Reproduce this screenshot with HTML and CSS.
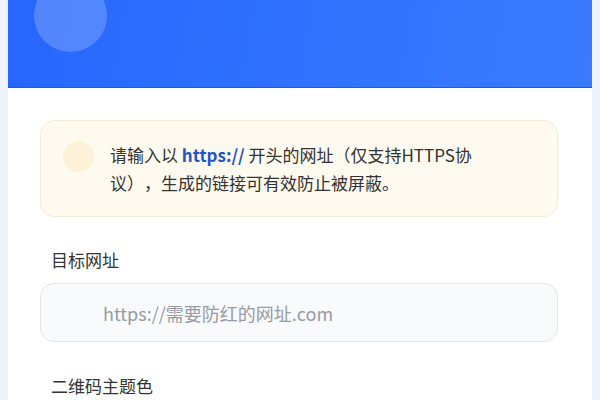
FILE: index.html
```html
<!DOCTYPE html>
<html lang="zh-CN">
<head>
<meta charset="utf-8">
<title>防红链接生成</title>
<link rel="stylesheet" href="styles.css">
</head>
<body>
<div class="card">
  <div class="hero">
    <span class="bubble"></span>
  </div>
  <div class="content">
    <div class="notice">
      <span class="notice-icon"></span>
      <p class="notice-text">请输入以 <strong>https://</strong> 开头的网址（仅支持HTTPS协议），生成的链接可有效防止被屏蔽。</p>
    </div>
    <div class="field">
      <label class="label" for="url">目标网址</label>
      <input class="input" id="url" type="text" placeholder="https://需要防红的网址.com">
    </div>
    <div class="field">
      <label class="label">二维码主题色</label>
    </div>
  </div>
</div>
</body>
</html>
```
FILE: styles.css
```css
html, body {
  height: 100%;
}
body {
  margin: 0 8px;
  background: #eef2fa;
  font-family: "Noto Sans CJK SC", "Noto Sans", sans-serif;
  color: #333;
  overflow: hidden;
}
.card {
  background: #fff;
  min-height: 100%;
  box-shadow: 0 0 6px rgba(40, 70, 140, 0.08);
}
.hero {
  position: relative;
  height: 87px;
  overflow: hidden;
  background: linear-gradient(100deg, #2766fd 0%, #2f71fe 45%, #3a7afd 100%);
  border-bottom: 1px solid #1d58e6;
}
.bubble {
  position: absolute;
  left: 26px;
  top: -21px;
  width: 73px;
  height: 73px;
  border-radius: 50%;
  background: rgba(255, 255, 255, 0.2);
}
.content {
  padding: 32px 34px 0 32px;
}
.notice {
  display: flex;
  align-items: flex-start;
  gap: 16px;
  padding: 20px 22px 19px 22px;
  background: #fffaf0;
  border: 1px solid #f6ecd2;
  border-radius: 14px;
}
.notice-icon {
  flex: none;
  width: 31px;
  height: 31px;
  border-radius: 50%;
  background: #fdf1d8;
}
.notice-text {
  margin: 0;
  width: 392px;
  font-size: 17px;
  line-height: 28px;
  color: #333;
  text-spacing-trim: space-all;
}
.notice-text strong {
  color: #1d55c9;
  font-weight: 700;
}
.field {
  margin-top: 31px;
}
.field + .field {
  margin-top: 32px;
}
.label {
  display: block;
  padding-left: 11px;
  font-size: 17px;
  line-height: 24px;
  color: #333;
}
.input {
  display: block;
  box-sizing: border-box;
  width: 100%;
  height: 59px;
  margin-top: 11px;
  padding: 0 16px 0 62px;
  background: #f8fafc;
  border: 1px solid #e2e6ec;
  border-radius: 14px;
  font-family: inherit;
  font-size: 18px;
  color: #333;
  outline: none;
}
.input::placeholder {
  color: #979ba3;
}
```
